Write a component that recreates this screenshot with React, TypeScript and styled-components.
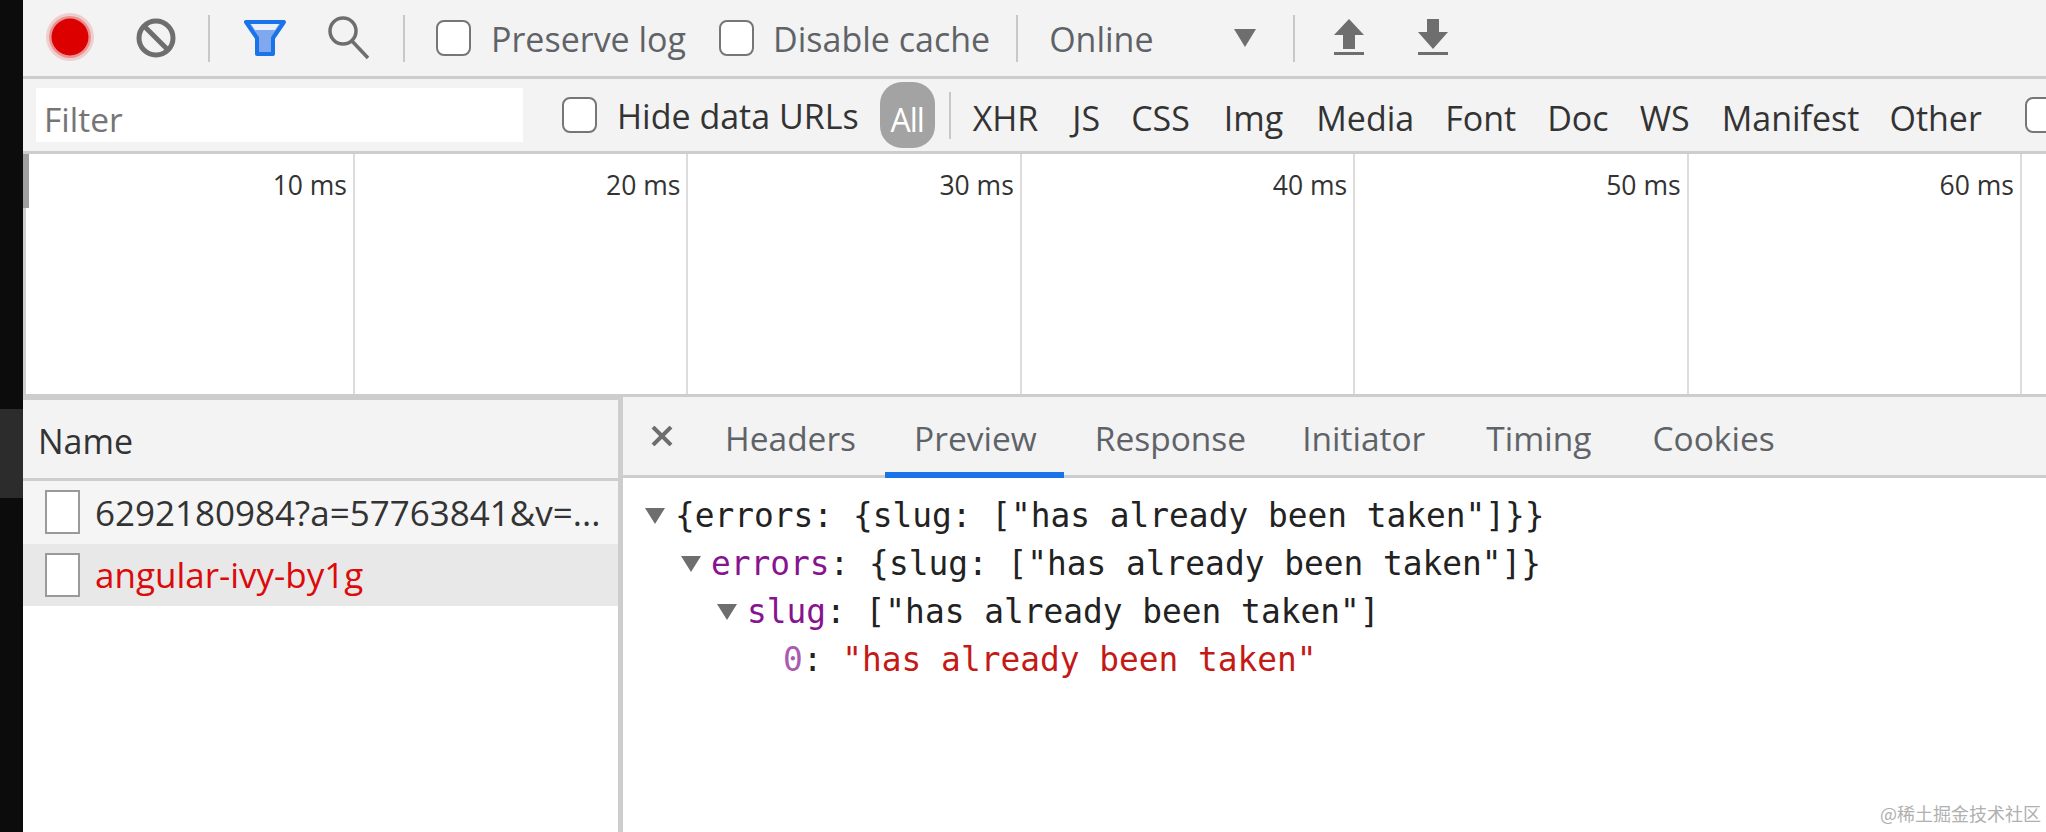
import React from 'react';
import styled, { createGlobalStyle } from 'styled-components';

const GlobalStyle = createGlobalStyle`
    html, body {
        margin: 0;
        height: 100%;
        background: #fff;
        overflow: hidden;
    }
    #root {
        height: 100%;
    }
`;

const SANS = '"Open Sans", "Noto Sans", sans-serif';
const MONO = '"DejaVu Sans Mono", monospace';

const Page = styled.div`
    display: flex;
    width: 2046px;
    height: 832px;
    font-family: ${SANS};
    position: relative;
`;

const Strip = styled.div`
    width: 23px;
    flex: none;
    display: flex;
    flex-direction: column;
    background: #0c0c0c;
`;

const StripHandle = styled.div`
    margin-top: 409px;
    height: 89px;
    background: #2c2c2c;
`;

const Main = styled.div`
    flex: 1;
    min-width: 0;
    display: flex;
    flex-direction: column;
`;

const Toolbar = styled.div`
    height: 76px;
    flex: none;
    display: flex;
    align-items: center;
    background: #f3f3f3;
    border-bottom: 3px solid #cdcdcd;
    color: #5f6368;
    font-size: 34px;
`;

const FilterBar = styled.div`
    height: 72px;
    flex: none;
    display: flex;
    align-items: center;
    background: #f3f3f3;
    border-bottom: 3px solid #cdcdcd;
    color: #333;
    font-size: 34px;
    white-space: nowrap;
    overflow: hidden;
`;

const Separator = styled.div<{ $left: number }>`
    width: 2px;
    height: 47px;
    flex: none;
    background: #c8c8c8;
    margin-left: ${p => p.$left}px;
`;

const ToolIcon = styled.svg<{ $ml: number }>`
    flex: none;
    margin-left: ${p => p.$ml}px;
`;

const Box = styled.span<{ $ml: number }>`
    width: 35px;
    height: 36px;
    flex: none;
    box-sizing: border-box;
    margin-left: ${p => p.$ml}px;
    background: #fff;
    border: 2px solid #767676;
    border-radius: 8px;
`;

const CheckLabel = styled.span<{ $ml: number }>`
    margin-left: ${p => p.$ml}px;
    padding-top: 2px;
    white-space: nowrap;
`;

const FilterInput = styled.div`
    width: 487px;
    height: 54px;
    margin-left: 13px;
    flex: none;
    box-sizing: border-box;
    padding: 8px 0 0 8px;
    display: flex;
    align-items: center;
    background: #fff;
    color: #757575;
    font-size: 33.5px;
`;

const AllPill = styled.span`
    width: 55px;
    height: 66px;
    margin-left: 21px;
    padding-top: 8px;
    flex: none;
    box-sizing: border-box;
    display: flex;
    align-items: center;
    justify-content: center;
    border-radius: 22px;
    background: #a3a3a3;
    color: #fff;
    font-size: 32px;
    letter-spacing: -1px;
`;

const TypeItem = styled.span<{ $ml: number }>`
    margin-left: ${p => p.$ml}px;
    padding-top: 6px;
    flex: none;
`;

const Timeline = styled.div`
    height: 240px;
    flex: none;
    position: relative;
    display: flex;
    background: #fff;
    border-left: 3px solid #cdcdcd;
    border-bottom: 3px solid #cdcdcd;

    &::before {
        content: '';
        position: absolute;
        left: -3px;
        top: 0;
        width: 6px;
        height: 54px;
        background: #a0a0a0;
    }
`;

const TimeCell = styled.div<{ $first?: boolean }>`
    width: ${p => (p.$first ? 329 : 333.4)}px;
    flex: none;
    box-sizing: border-box;
    padding: 13px 6px 0 0;
    border-right: 2.5px solid #dcdcdc;
    text-align: right;
    color: #333;
    font-size: 26.5px;
    line-height: 36px;
`;

const Split = styled.div`
    flex: 1;
    min-height: 0;
    display: flex;
`;

const ListPane = styled.div`
    width: 595px;
    flex: none;
    display: flex;
    flex-direction: column;
    background: #fff;
    border-top: 3px solid #cdcdcd;
    border-right: 5px solid #cdcdcd;
`;

const ListHeader = styled.div`
    height: 75px;
    flex: none;
    padding: 3px 0 0 15px;
    display: flex;
    align-items: center;
    background: #f3f3f3;
    color: #333;
    font-size: 34px;
    border-bottom: 3px solid #cdcdcd;
`;

const Row = styled.div<{ $selected?: boolean }>`
    height: 62.5px;
    flex: none;
    padding-left: 22px;
    display: flex;
    align-items: center;
    gap: 15px;
    background: ${p => (p.$selected ? '#e8e8e8' : '#f5f5f5')};
    color: ${p => (p.$selected ? '#dc0a0a' : '#333')};
    font-size: 35px;
    white-space: nowrap;
`;

const FileIcon = styled.span`
    width: 35px;
    height: 44px;
    flex: none;
    box-sizing: border-box;
    background: #fff;
    border: 2px solid #9a9a9a;
`;

const DetailPane = styled.div`
    flex: 1;
    min-width: 0;
    display: flex;
    flex-direction: column;
    background: #fff;
`;

const Tabs = styled.div`
    height: 78px;
    flex: none;
    display: flex;
    align-items: center;
    background: #f3f3f3;
    border-bottom: 3px solid #cdcdcd;
`;

const CloseTab = styled.span`
    width: 22px;
    margin: 0 23px 0 28px;
    flex: none;
    display: flex;
`;

const TabItem = styled.span<{ $active?: boolean; $ml: number }>`
    height: 81px;
    margin: 0 0 -3px ${p => p.$ml}px;
    padding: 7px ${p => (p.$active ? 27 : 29)}px 0 29px;
    flex: none;
    box-sizing: border-box;
    display: flex;
    align-items: center;
    color: #5f6368;
    font-size: 33.5px;
    border-bottom: 6px solid ${p => (p.$active ? '#1a73e8' : 'transparent')};
`;

const Tree = styled.div`
    padding-top: 14px;
    font-family: ${MONO};
    font-size: 32.85px;
    line-height: 48px;
    white-space: pre;
    color: #222;
`;

const TreeLine = styled.div<{ $indent: number }>`
    display: flex;
    align-items: center;
    height: 48px;
    padding-left: ${p => p.$indent}px;
`;

const TreeCaret = styled.svg`
    width: 20px;
    height: 18px;
    margin-right: 10px;
    flex: none;
`;

const Key = styled.span<{ $faded?: boolean }>`
    color: ${p => (p.$faded ? '#a85bb0' : '#881391')};
`;

const Str = styled.span`
    color: #c41a16;
`;

const Watermark = styled.div`
    position: absolute;
    right: 5px;
    bottom: 6px;
    font-family: "Noto Sans CJK SC", sans-serif;
    font-size: 18px;
    color: #b0b0b0;
`;

const Caret = () => (
    <TreeCaret viewBox="0 0 20 18">
        <path d="M0 1h20L10 17z" fill="#6e6e6e" />
    </TreeCaret>
);

const TIME_LABELS = ['10 ms', '20 ms', '30 ms', '40 ms', '50 ms', '60 ms'];

const TYPES: [string, number][] = [
    ['XHR', 22], ['JS', 34], ['CSS', 31], ['Img', 34], ['Media', 33], ['Font', 31],
    ['Doc', 31], ['WS', 31], ['Manifest', 32], ['Other', 30],
];

const TABS: [string, number][] = [
    ['Headers', 0], ['Preview', 0], ['Response', 2], ['Initiator', -2], ['Timing', 3], ['Cookies', 3],
];

export default function App() {
    return (
        <Page>
            <GlobalStyle />
            <Strip>
                <StripHandle />
            </Strip>
            <Main>
                <Toolbar>
                    <ToolIcon $ml={21} width="52" height="52" viewBox="0 0 52 52">
                        <circle cx="26" cy="25" r="24" fill="#e00000" opacity="0.15" />
                        <circle cx="26" cy="25" r="21" fill="#e00000" opacity="0.3" />
                        <circle cx="26" cy="25" r="18.5" fill="#dc0000" />
                    </ToolIcon>
                    <ToolIcon $ml={38} width="44" height="44" viewBox="0 0 44 44">
                        <circle cx="22" cy="22" r="17" fill="none" stroke="#6e6e6e" strokeWidth="5" />
                        <path d="M10 10l24 24" stroke="#6e6e6e" strokeWidth="5" />
                    </ToolIcon>
                    <Separator $left={30} />
                    <ToolIcon $ml={32} width="46" height="40" viewBox="0 0 46 40">
                        <path d="M4 4h38L31 20v16H15V20z" fill="#7fa8ee" stroke="#1a73e8" strokeWidth="4" strokeLinejoin="round" />
                        <path d="M9 6h28l-4 6H13z" fill="#eaf0fb" />
                    </ToolIcon>
                    <ToolIcon $ml={39} width="44" height="44" viewBox="0 0 44 44">
                        <circle cx="16" cy="15" r="13" fill="none" stroke="#6e6e6e" strokeWidth="3.5" />
                        <path d="M25 25l16 17" stroke="#6e6e6e" strokeWidth="3.5" />
                    </ToolIcon>
                    <Separator $left={32} />
                    <Box $ml={31} />
                    <CheckLabel $ml={20}>Preserve log</CheckLabel>
                    <Box $ml={33} />
                    <CheckLabel $ml={19}>Disable cache</CheckLabel>
                    <Separator $left={26} />
                    <CheckLabel $ml={31}>Online</CheckLabel>
                    <ToolIcon $ml={80} width="22" height="18" viewBox="0 0 22 18">
                        <path d="M0 0h22L11 18z" fill="#6e6e6e" />
                    </ToolIcon>
                    <Separator $left={37} />
                    <ToolIcon $ml={39} width="30" height="38" viewBox="0 0 30 38">
                        <path d="M15 0L30 16h-9v14H9V16H0zM0 33h30v3H0z" fill="#6e6e6e" />
                    </ToolIcon>
                    <ToolIcon $ml={54} width="30" height="38" viewBox="0 0 30 38">
                        <path d="M9 0h12v13h9L15 30 0 13h9zM0 33h30v3H0z" fill="#6e6e6e" />
                    </ToolIcon>
                </Toolbar>
                <FilterBar>
                    <FilterInput>Filter</FilterInput>
                    <Box $ml={39} />
                    <CheckLabel $ml={20}>Hide data URLs</CheckLabel>
                    <AllPill>All</AllPill>
                    <Separator $left={14} />
                    {TYPES.map(([name, ml]) => (
                        <TypeItem key={name} $ml={ml}>{name}</TypeItem>
                    ))}
                    <Box $ml={43} />
                </FilterBar>
                <Timeline>
                    {TIME_LABELS.map((label, i) => (
                        <TimeCell key={label} $first={i === 0}>{label}</TimeCell>
                    ))}
                </Timeline>
                <Split>
                    <ListPane>
                        <ListHeader>Name</ListHeader>
                        <Row>
                            <FileIcon />
                            6292180984?a=57763841&amp;v=...
                        </Row>
                        <Row $selected>
                            <FileIcon />
                            angular-ivy-by1g
                        </Row>
                    </ListPane>
                    <DetailPane>
                        <Tabs>
                            <CloseTab>
                                <svg width="22" height="20" viewBox="0 0 22 20">
                                    <path d="M2 1l18 18M20 1L2 19" stroke="#6e6e6e" strokeWidth="4" />
                                </svg>
                            </CloseTab>
                            {TABS.map(([name, ml]) => (
                                <TabItem key={name} $ml={ml} $active={name === 'Preview'}>{name}</TabItem>
                            ))}
                        </Tabs>
                        <Tree>
                            <TreeLine $indent={22}>
                                <Caret />
                                {'{errors: {slug: ["has already been taken"]}}'}
                            </TreeLine>
                            <TreeLine $indent={58}>
                                <Caret />
                                <Key>errors</Key>{': {slug: ["has already been taken"]}'}
                            </TreeLine>
                            <TreeLine $indent={94}>
                                <Caret />
                                <Key>slug</Key>{': ["has already been taken"]'}
                            </TreeLine>
                            <TreeLine $indent={160}>
                                <Key $faded>0</Key>{': '}<Str>"has already been taken"</Str>
                            </TreeLine>
                        </Tree>
                    </DetailPane>
                </Split>
            </Main>
            <Watermark>@稀土掘金技术社区</Watermark>
        </Page>
    );
}
